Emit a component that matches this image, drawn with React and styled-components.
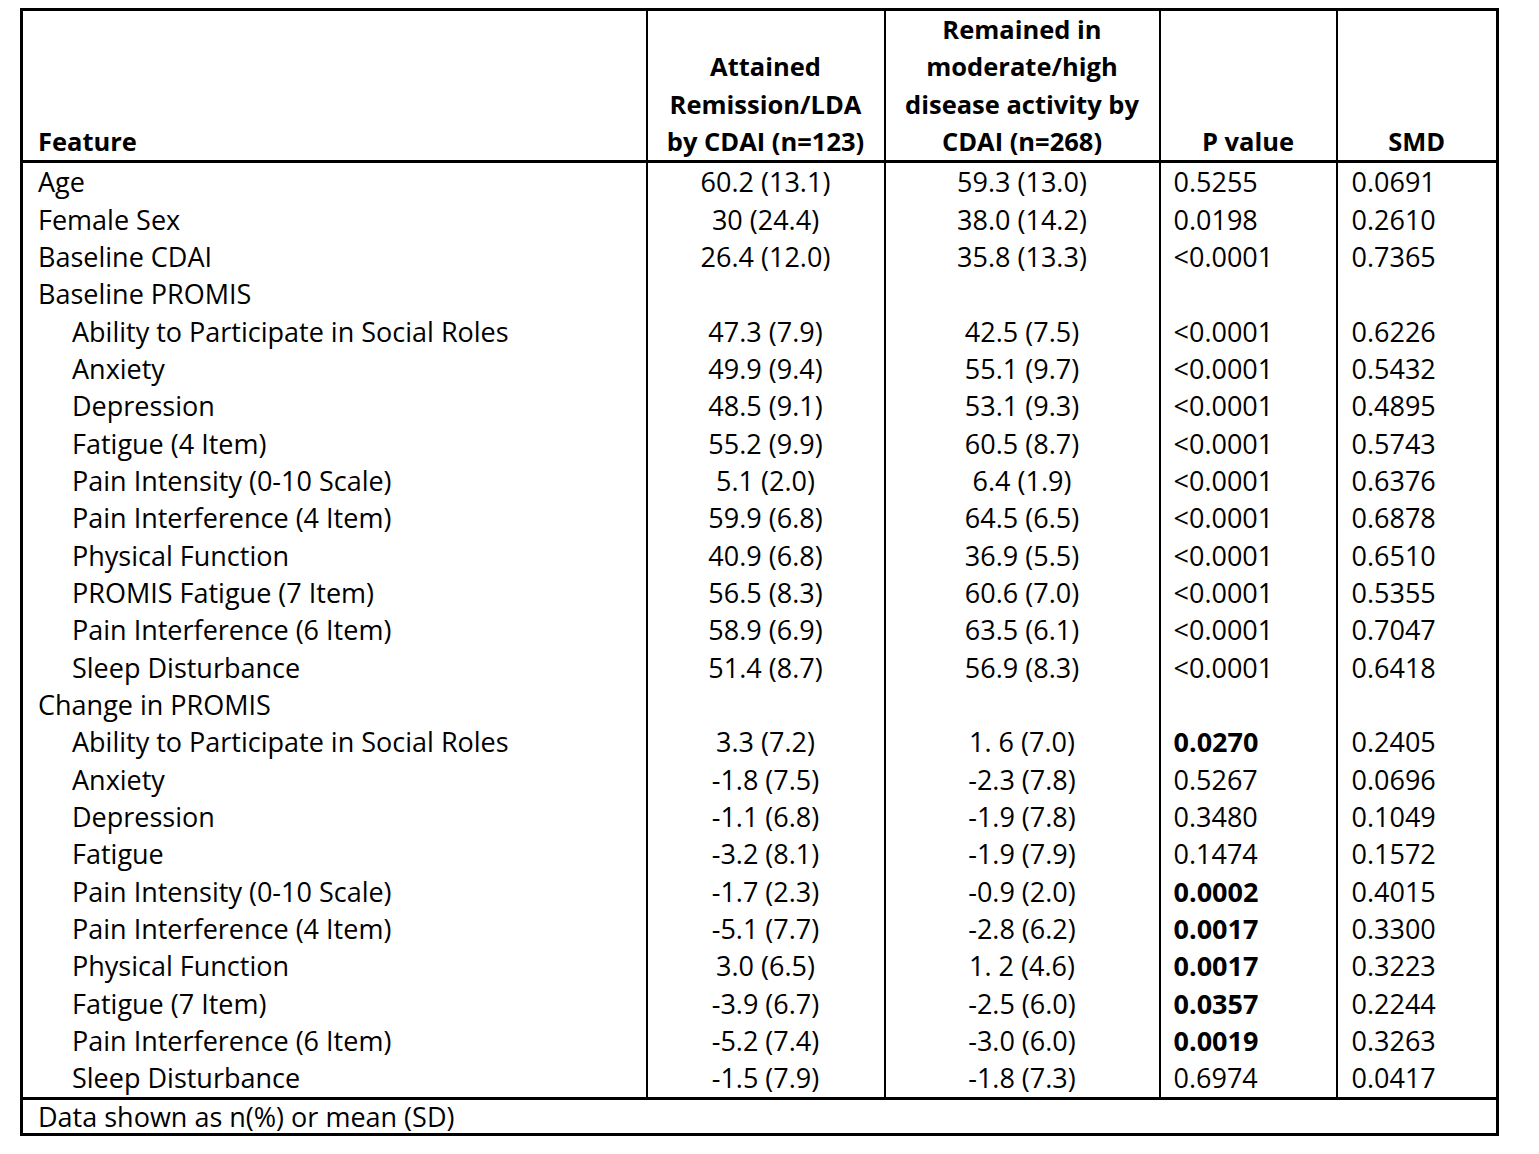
import styled, { createGlobalStyle } from "styled-components";

const GlobalStyle = createGlobalStyle`
  html, body {
    margin: 0;
    padding: 0;
    background: #fff;
  }
  body {
    font-family: "Open Sans", "Liberation Sans", sans-serif;
    color: #000;
  }
`;

const Page = styled.div`
  padding: 8px 0 0 20px;
`;

const Table = styled.table`
  border-collapse: collapse;
  table-layout: fixed;
  width: 1479px;
  border: 3px solid #000;
  font-size: 27px;
  line-height: 37.33px;
`;

const HeadCell = styled.th`
  vertical-align: bottom;
  font-weight: 700;
  font-size: 25.5px;
  text-align: ${(p) => (p.$left ? "left" : "center")};
  padding: 0 ${(p) => (p.$left ? "0 0 15px" : "2px")};
  border: 2px solid #000;
  border-bottom: 3px solid #000;
`;

const Cell = styled.td`
  padding: 0 0 0 ${(p) => p.$pad || 0}px;
  height: 37.33px;
  text-align: ${(p) => p.$align || "left"};
  font-weight: ${(p) => (p.$bold ? 700 : 400)};
  border-left: 2px solid #000;
  border-right: 2px solid #000;
  white-space: nowrap;
`;

const NoteCell = styled.td`
  padding: 0 0 0 15px;
  height: 33px;
  line-height: 33px;
  border-top: 3px solid #000;
`;

const rows = [
  ["Age", 0, "60.2 (13.1)", "59.3 (13.0)", "0.5255", "0.0691"],
  ["Female Sex", 0, "30 (24.4)", "38.0 (14.2)", "0.0198", "0.2610"],
  ["Baseline CDAI", 0, "26.4 (12.0)", "35.8 (13.3)", "<0.0001", "0.7365"],
  ["Baseline PROMIS", 0, "", "", "", ""],
  ["Ability to Participate in Social Roles", 1, "47.3 (7.9)", "42.5 (7.5)", "<0.0001", "0.6226"],
  ["Anxiety", 1, "49.9 (9.4)", "55.1 (9.7)", "<0.0001", "0.5432"],
  ["Depression", 1, "48.5 (9.1)", "53.1 (9.3)", "<0.0001", "0.4895"],
  ["Fatigue (4 Item)", 1, "55.2 (9.9)", "60.5 (8.7)", "<0.0001", "0.5743"],
  ["Pain Intensity (0-10 Scale)", 1, "5.1 (2.0)", "6.4 (1.9)", "<0.0001", "0.6376"],
  ["Pain Interference (4 Item)", 1, "59.9 (6.8)", "64.5 (6.5)", "<0.0001", "0.6878"],
  ["Physical Function", 1, "40.9 (6.8)", "36.9 (5.5)", "<0.0001", "0.6510"],
  ["PROMIS Fatigue (7 Item)", 1, "56.5 (8.3)", "60.6 (7.0)", "<0.0001", "0.5355"],
  ["Pain Interference (6 Item)", 1, "58.9 (6.9)", "63.5 (6.1)", "<0.0001", "0.7047"],
  ["Sleep Disturbance", 1, "51.4 (8.7)", "56.9 (8.3)", "<0.0001", "0.6418"],
  ["Change in PROMIS", 0, "", "", "", ""],
  ["Ability to Participate in Social Roles", 1, "3.3 (7.2)", "1. 6 (7.0)", "0.0270", "0.2405", true],
  ["Anxiety", 1, "-1.8 (7.5)", "-2.3 (7.8)", "0.5267", "0.0696"],
  ["Depression", 1, "-1.1 (6.8)", "-1.9 (7.8)", "0.3480", "0.1049"],
  ["Fatigue", 1, "-3.2 (8.1)", "-1.9 (7.9)", "0.1474", "0.1572"],
  ["Pain Intensity (0-10 Scale)", 1, "-1.7 (2.3)", "-0.9 (2.0)", "0.0002", "0.4015", true],
  ["Pain Interference (4 Item)", 1, "-5.1 (7.7)", "-2.8 (6.2)", "0.0017", "0.3300", true],
  ["Physical Function", 1, "3.0 (6.5)", "1. 2 (4.6)", "0.0017", "0.3223", true],
  ["Fatigue (7 Item)", 1, "-3.9 (6.7)", "-2.5 (6.0)", "0.0357", "0.2244", true],
  ["Pain Interference (6 Item)", 1, "-5.2 (7.4)", "-3.0 (6.0)", "0.0019", "0.3263", true],
  ["Sleep Disturbance", 1, "-1.5 (7.9)", "-1.8 (7.3)", "0.6974", "0.0417"],
];

export default function App() {
  return (
    <Page>
      <GlobalStyle />
      <Table>
        <colgroup>
          <col style={{ width: 625 }} />
          <col style={{ width: 238 }} />
          <col style={{ width: 275 }} />
          <col style={{ width: 177 }} />
          <col style={{ width: 161 }} />
        </colgroup>
        <thead>
          <tr>
            <HeadCell $left>Feature</HeadCell>
            <HeadCell>
              Attained
              <br />
              Remission/LDA
              <br />
              by CDAI (n=123)
            </HeadCell>
            <HeadCell>
              Remained in
              <br />
              moderate/high
              <br />
              disease activity by
              <br />
              CDAI (n=268)
            </HeadCell>
            <HeadCell>P value</HeadCell>
            <HeadCell>SMD</HeadCell>
          </tr>
        </thead>
        <tbody>
          {rows.map(([name, indent, a, b, p, smd, sig], i) => (
            <tr key={i}>
              <Cell $pad={indent ? 49 : 15}>{name}</Cell>
              <Cell $align="center">{a}</Cell>
              <Cell $align="center">{b}</Cell>
              <Cell $pad={13} $bold={sig}>{p}</Cell>
              <Cell $pad={14}>{smd}</Cell>
            </tr>
          ))}
          <tr>
            <NoteCell colSpan={5}>Data shown as n(%) or mean (SD)</NoteCell>
          </tr>
        </tbody>
      </Table>
    </Page>
  );
}
